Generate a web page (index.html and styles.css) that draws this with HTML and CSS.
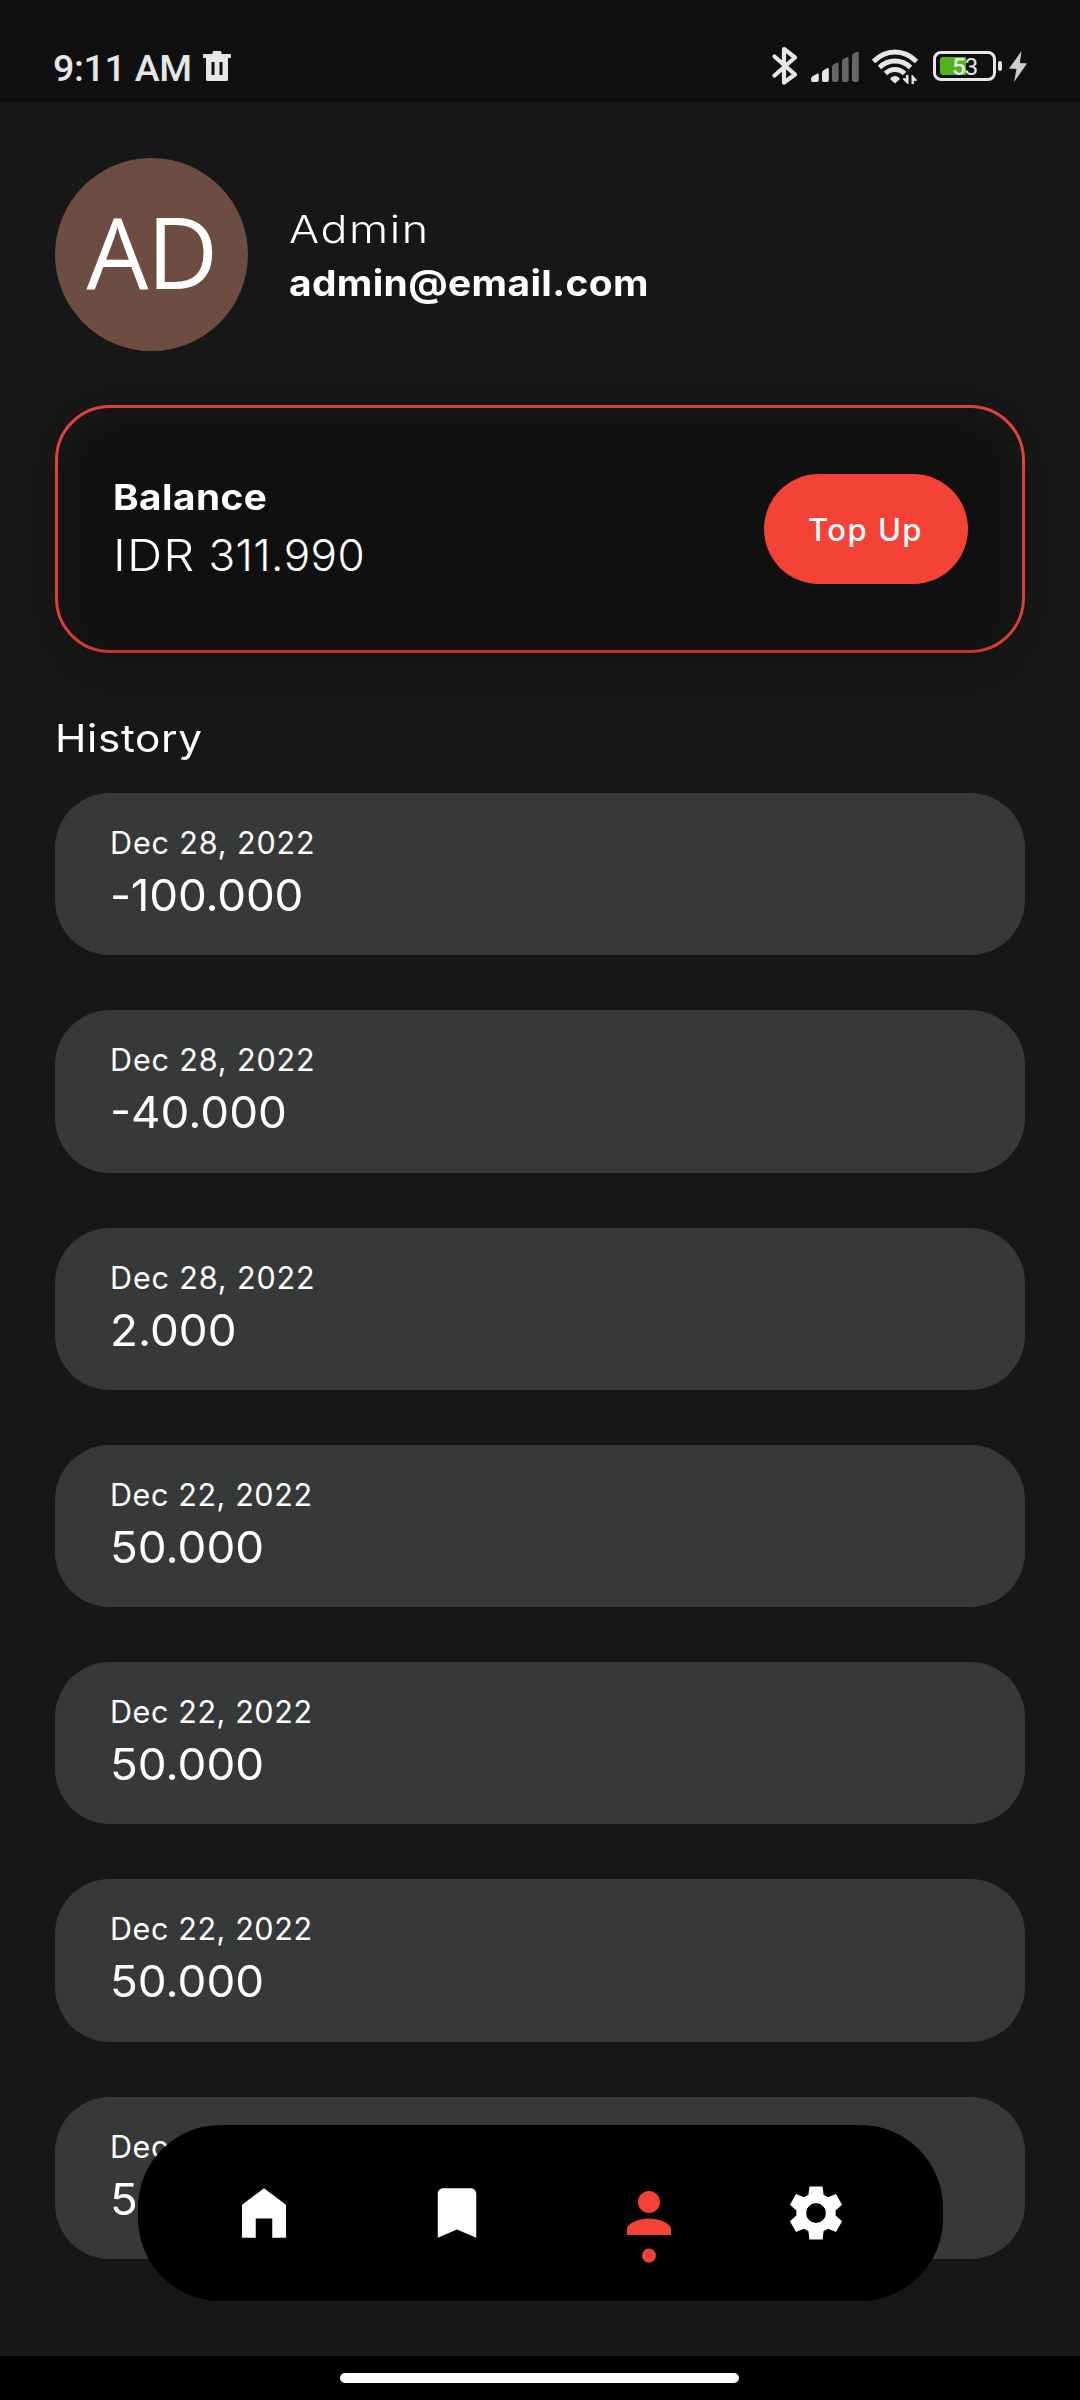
FILE: index.html
```
<!DOCTYPE html>
<html lang="en">
<head>
<meta charset="utf-8">
<title>Profile</title>
<link rel="stylesheet" href="styles.css">
</head>
<body>
<div class="screen">
  <header class="status">
    <span class="clock">9:11 AM</span>
    <svg class="trash" viewBox="0 0 28 31" width="28" height="31"><path fill="#e6e6e6" fill-rule="evenodd" d="M9.500 1.500Q9.500 0 11 0h6q1.500 0 1.500 1.500V3H27q1 0 1 1v2q0 1-1 1h-2v21.500q0 1.500-1.500 1.500h-19Q3 30 3 28.500V7H1Q0 7 0 6V4q0-1 1-1h8.500zM8.500 11v13h3V11zm8 0v13h3V11z"/></svg>
    <div class="indicators">
      <svg viewBox="770 40 92 50" width="92" height="50">
        <path d="M774.500 56.500 795 74.500 784 82.500V49L795 57.500 774.500 75.500" fill="none" stroke="#e6e6e6" stroke-width="4.200" stroke-linejoin="round" stroke-linecap="round"/>
        <path fill="#e6e6e6" d="M811 79q0-2 2-3l4-2.300q1.800-.8 1.800 1V80q0 2-2 2h-4q-1.800 0-1.800-2zM822 73q0-2 2-3l3-1.800q1.800-.8 1.800 1V80q0 2-2 2h-3q-1.800 0-1.800-2z"/>
        <path fill="#666" d="M832 67q0-2 2-3l3-1.300q1.600-.5 1.600 1V80q0 2-2 2h-2.600q-2 0-2-2zM842 61.500q0-2 2-3l3-1.300q1.600-.5 1.600 1V80q0 2-2 2h-2.600q-2 0-2-2zM852 56q0-2 2-3l3-1.300q1.800-.5 1.800 1V80q0 2-2 2h-2.800q-2 0-2-2z"/>
      </svg>
      <svg viewBox="870 40 50 50" width="50" height="50">
        <g fill="none" stroke="#e6e6e6" stroke-width="4.800"><path d="M873.500 61.500Q883 52 895 52t21.500 9.500"/><path d="M879.500 67.500Q886 61 895 61t15.500 6.500"/><path d="M885.500 73.500Q889.500 69.500 895 69.500t9.500 4"/></g>
        <path fill="#e6e6e6" d="M890.500 78q4.500-4 9 0v1.500l-4.500 4-4.500-4zM906 75h2.500v9h-1l-4.500-4.500v-1.300h3zM911.500 84V75h1l4 4.500V81h-2.500v3z"/>
      </svg>
      <div class="battery"><div class="charge"></div><span class="percent">5<span class="thin">3</span></span></div>
      <div class="nub"></div>
      <svg class="bolt" viewBox="0 0 18 31" width="18" height="31"><path fill="#ccc" d="M12.500 0 0 17.500l7.500.5L5 31 18 12.500l-7.200-.5z"/></svg>
    </div>
  </header>

  <main class="content">
    <section class="profile">
      <div class="avatar">AD</div>
      <div class="who">
        <div class="name"><span>Admin</span></div>
        <div class="email"><span>admin@email.com</span></div>
      </div>
    </section>

    <section class="balance">
      <div>
        <div class="label"><span>Balance</span></div>
        <div class="total"><span class="currency">IDR</span> 311.990</div>
      </div>
      <button class="topup">Top Up</button>
    </section>

    <h2 class="heading"><span>History</span></h2>
    <div class="history">
      <article class="entry"><div class="date">Dec 28, 2022</div><div class="amount tight"><span>-100.000</span></div></article>
      <article class="entry"><div class="date">Dec 28, 2022</div><div class="amount"><span>-40.000</span></div></article>
      <article class="entry"><div class="date">Dec 28, 2022</div><div class="amount"><span>2.000</span></div></article>
      <article class="entry"><div class="date older">Dec 22, 2022</div><div class="amount"><span>50.000</span></div></article>
      <article class="entry"><div class="date older">Dec 22, 2022</div><div class="amount"><span>50.000</span></div></article>
      <article class="entry"><div class="date older">Dec 22, 2022</div><div class="amount"><span>50.000</span></div></article>
      <article class="entry"><div class="date older">Dec 22, 2022</div><div class="amount"><span>50.000</span></div></article>
    </div>
  </main>

  <nav class="tabs">
    <svg class="wide" viewBox="0 0 24 24"><path d="M12 3 4 9v12h5v-7h6v7h5V9z"/></svg>
    <svg class="wide" viewBox="0 0 24 24"><path d="M17 3H7c-1.100 0-2 .9-2 2v16l7-3 7 3V5c0-1.100-.9-2-2-2z"/></svg>
    <svg class="active" viewBox="0 0 24 30"><path d="M12 12c2.210 0 4-1.790 4-4s-1.790-4-4-4-4 1.790-4 4 1.790 4 4 4zm0 2c-2.670 0-8 1.340-8 4v2h16v-2c0-2.660-5.330-4-8-4z"/><circle cx="12" cy="27.500" r="2.550"/></svg>
    <svg viewBox="0 0 24 24"><path fill-rule="evenodd" d="M9.600 2.400h4.800l.35 2.950 1.620.94 2.880-1.190L21.500 9l-2.370 2.060v1.880L21.500 15l-2.250 3.900-2.880-1.190-1.620.94-.35 2.950H9.600l-.35-2.950-1.620-.94L4.750 18.900 2.500 15l2.370-2.060v-1.880L2.500 9l2.250-3.900 2.880 1.190 1.620-.94zM12 8.400a3.600 3.600 0 1 0 0 7.200 3.600 3.600 0 0 0 0-7.200z"/></svg>
  </nav>
  <footer class="gesture"><div class="handle"></div></footer>
</div>
</body>
</html>
```

FILE: styles.css
```
* { box-sizing: border-box; }
body { margin: 0; background: #171717; color: #fff; font-family: Inter, "Liberation Sans", sans-serif; }
.screen { position: relative; display: flex; flex-direction: column; width: 1080px; height: 2400px; overflow: hidden; }

.status { flex: none; display: flex; align-items: center; height: 103px; padding: 30px 53px 0; background: #101010; color: #e6e6e6; font-family: Roboto, sans-serif; }
.clock { width: 150px; font-size: 37.500px; font-weight: 500; line-height: 44px; letter-spacing: -0.300px; padding-top: 2px; }
.trash { margin-top: -1px; }
.indicators { display: flex; align-items: center; margin: -3px 0 0 539px; }
.indicators svg { flex: none; }
.indicators svg:nth-child(2) { margin-left: 8px; }
.battery { position: relative; flex: none; width: 63px; height: 30px; margin: 2px 0 0 13px; padding: 3px 4px; border: 3px solid #e6e6e6; border-radius: 8px; }
.charge { width: 26px; height: 18px; border-radius: 3px 0 0 3px; background: #4fb51a; }
.percent { position: absolute; left: 16px; top: -1px; font-size: 24.500px; font-weight: 500; line-height: 28px; letter-spacing: -1.500px; }
.thin { font-weight: 400; }
.nub { flex: none; width: 4px; height: 10px; margin: 2px 0 0 2px; border-radius: 2px; background: #e6e6e6; }
.bolt { margin: 2px 0 0 7px; }

.content { flex: 1; min-height: 0; overflow: hidden; padding: 55px 55px 0; }
.profile { display: flex; align-items: center; gap: 41px; height: 193px; }
.avatar { width: 193px; height: 193px; border-radius: 50%; background: #6d4c41; font-family: "Open Sans", sans-serif; font-size: 98px; line-height: 187px; letter-spacing: -1.500px; text-align: center; }
.who { padding-top: 3px; line-height: 54px; }
.who span, .label span, .heading span, .amount span { display: inline-block; transform-origin: left; }
.name { font-size: 38px; font-weight: 300; }
.name span { transform: scaleX(1.180); letter-spacing: 1.300px; }
.email { font-size: 36px; font-weight: 700; }
.email span { transform: scaleX(1.080); letter-spacing: 0.350px; }

.balance { position: relative; z-index: 0; display: flex; align-items: center; justify-content: space-between; height: 248px; margin-top: 54px; padding: 0 54.500px 0 55px; border: 3px solid #e94539; border-radius: 55px; }
.balance::before { content: ""; position: absolute; z-index: -1; inset: 11px 12px -11px; border-radius: 55px; background: rgba(0, 0, 0, .3); filter: blur(16px); }
.label { font-size: 35.500px; font-weight: 700; line-height: 54px; }
.label span { transform: scaleX(1.090); letter-spacing: 0.450px; }
.total { font-size: 44px; font-weight: 300; line-height: 60px; padding-bottom: 2px; letter-spacing: 0.450px; }
.currency { display: inline-block; margin-right: 8.500px; transform: scaleX(1.110); transform-origin: left; letter-spacing: 1px; }
.topup { width: 204px; height: 110px; padding: 0; border: 0; border-radius: 55px; background: #f44336; color: #fff; font: 500 31px Inter, sans-serif; letter-spacing: 1.500px; }

.heading { margin: 58px 0 27px; font-size: 38.500px; font-weight: 400; line-height: 55px; }
.heading span { transform: scaleX(1.100); letter-spacing: 0.550px; }
.history { display: flex; flex-direction: column; gap: 55px; }
.entry { flex: none; height: 162.250px; padding: 26px 55px 0; border-radius: 55px; background: #373938; }
.date { font-size: 30.500px; line-height: 48px; letter-spacing: 0.870px; }
.date.older { letter-spacing: 0.600px; }
.amount { font-size: 44px; font-weight: 400; line-height: 57px; }
.amount span { transform: scaleX(1.040); letter-spacing: 0; }
.amount.tight span { letter-spacing: -0.200px; }

.tabs { position: absolute; left: 137.500px; top: 2125px; display: flex; gap: 100.900px; width: 805px; height: 176px; padding: 55px 0 0 93.500px; border-radius: 82.500px; background: #000; fill: #fff; }
.tabs svg { flex: none; width: 66px; height: 66px; }
.tabs .wide { margin-right: 25.800px; }
.tabs .active { height: 82.500px; fill: #f44336; }
.tabs svg:last-child { margin-left: -0.600px; }
.gesture { flex: none; height: 44px; padding: 17px 0 0 340px; background: #000; }
.handle { width: 399px; height: 10px; border-radius: 5px; background: #fff; }
```
